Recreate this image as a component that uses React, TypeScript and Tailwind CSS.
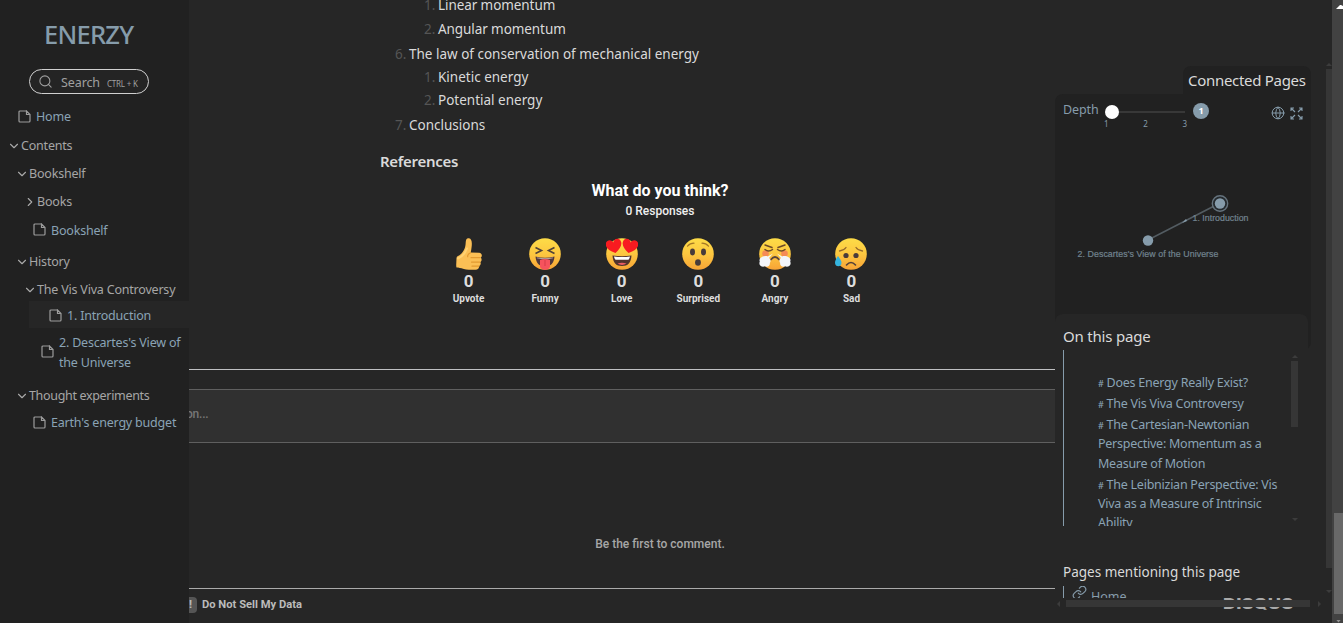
import type { ReactNode } from "react";
import { ChevronDown, ChevronRight, Globe, Link, Search } from "lucide-react";

function PageIcon() {
  return (
    <svg viewBox="0 0 13 13" className="mb-[3px] size-[13px] shrink-0 text-[#9c9c9c]" fill="none" stroke="currentColor" strokeWidth="1.2">
      <path d="M8.5 1H2Q1 1 1 2v9q0 1 1 1h9q1 0 1-1V4.5L8.5 1v3.5H12" />
    </svg>
  );
}

function Folder({ label, open = true, className }: { label: string; open?: boolean; className: string }) {
  const Icon = open ? ChevronDown : ChevronRight;
  return (
    <div className={`flex items-center whitespace-nowrap text-[#a6a6a6] ${className}`}>
      <Icon className="mb-px -ml-px size-[14px] shrink-0 text-[#aaaaaa]" strokeWidth={1.9} />
      <span>{label}</span>
    </div>
  );
}

function PageLink({ children, className }: { children: ReactNode; className: string }) {
  return (
    <div className={`flex items-center gap-[5px] whitespace-nowrap text-[#8aa3b5] ${className}`}>
      <PageIcon />
      <span>{children}</span>
    </div>
  );
}

function Sidebar() {
  return (
    <aside className="flex h-full w-[189px] shrink-0 flex-col bg-[#212121] text-[12.5px] tracking-[-0.2px]">
      <div className="mt-[16px] mb-px flex h-9 items-center pl-[44px] text-[25.5px] font-medium tracking-[-0.75px] text-[#869cab]">ENERZY</div>
      <div className="mt-[16px] ml-[29px] flex h-[25px] w-[120px] items-center rounded-full border border-[#d0d0d0] bg-[#242424] pl-[8px] text-[#a0a0a0]">
        <Search className="mb-px size-[15px]" strokeWidth={1.7} />
        <span className="mt-[3px] ml-[8px] tracking-[-0.1px]">Search</span>
        <span className="mt-[4px] ml-[7px] whitespace-nowrap text-[8px]">CTRL + K</span>
      </div>
      <nav className="mt-2 flex flex-col">
        <PageLink className="h-[29px] pt-[2px] pl-[18px]">Home</PageLink>
        <Folder label="Contents" className="h-7 pt-[2px] pl-[8px]" />
        <Folder label="Bookshelf" className="h-7 pt-[2px] pl-[16px]" />
        <Folder label="Books" open={false} className="h-7 pt-[2px] pl-[24px]" />
        <PageLink className="h-[30px] pt-[2px] pl-[33px]">Bookshelf</PageLink>
        <Folder label="History" className="mt-[2px] h-7 pt-[2px] pl-[16px]" />
        <Folder label="The Vis Viva Controversy" className="h-[26px] pt-[5px] pl-[24px]" />
        <PageLink className="ml-[29px] h-[27px] bg-[#262626] pt-[4px] pl-[20px]">1. Introduction</PageLink>
        <PageLink className="mt-[5px] h-10 pl-[41px] leading-5">
          2. Descartes's View of
          <br />
          the Universe
        </PageLink>
        <Folder label="Thought experiments" className="mt-[9px] h-7 pl-[16px] tracking-[-0.33px]" />
        <PageLink className="h-[27px] pl-[33px]">Earth's energy budget</PageLink>
      </nav>
    </aside>
  );
}

function Item({ n, children, className }: { n: string; children: string; className: string }) {
  return (
    <div className={`flex items-center ${className}`}>
      <span className="w-[14px] shrink-0 text-[#555555]">{n}</span>
      <span>{children}</span>
    </div>
  );
}

function Face({ children }: { children: ReactNode }) {
  return (
    <svg viewBox="0 0 32 32" className="size-8">
      <defs>
        <linearGradient id="face" x1="0" y1="0" x2="0" y2="1">
          <stop offset="0" stopColor="#fddc47" />
          <stop offset="0.5" stopColor="#fdc740" />
          <stop offset="1" stopColor="#f7a336" />
        </linearGradient>
      </defs>
      <circle cx="16" cy="16" r="15.8" fill="url(#face)" />
      {children}
    </svg>
  );
}

const heart = "M0 6.5C-4.5 3.6-7 1-7-2c0-4.5 5.7-5.2 7-1.2C1.3-7.2 7-6.5 7-2c0 3-2.5 5.6-7 8.5Z";

const reactions: { label: string; icon: ReactNode }[] = [
  {
    label: "Upvote",
    icon: (
      <svg viewBox="0 0 32 32" className="size-8">
        <path d="M3.5 20c0-2 3-2.2 5-4.5 3-3.5 4-6 4.200-11C12.800 1.200 14-.2 16 .3c3.200.8 3.600 4.700 1.700 14.200l8.300.3c3.200.2 3.600 3.800 1.700 4.800 1.500 1.500 1 3.800-.4 4.400 1 1.700.2 3.700-1.300 4.100.3 2-.9 3.500-3.500 3.600-7 .4-10-.3-14-1.500-4.500-1.200-5.300 1-5.300-3.200Z" fill="#fbbf55" />
        <path d="M17.500 14.700c-2 .8-3 2.300-2.800 4M18 19.700h9M18.500 24.100h8.300M19 28.200h7" fill="none" stroke="#e29a31" strokeWidth="1.200" strokeLinecap="round" />
        <path d="M5 20.500c4-1.500 7-5 9-10" fill="none" stroke="#ffd274" strokeWidth="2" strokeLinecap="round" />
      </svg>
    ),
  },
  {
    label: "Funny",
    icon: (
      <Face>
        <path d="m6.500 9.500 6 3-6 3M25.500 9.500l-6 3 6 3" fill="none" stroke="#514238" strokeWidth="1.600" />
        <path d="M6.500 18.500Q16 21 25.500 18.500C25 25 22 28.500 16 28.500S7 25 6.500 18.500Z" fill="#51383a" />
        <path d="M8 19.500q8 1.400 16 0v.8q-8 2-16 0Z" fill="#b9a5a2" />
        <path d="M11 22q5-2 10 0v6c0 5-10 5-10 0Z" fill="#f6535d" />
        <path d="M16 22v6" stroke="#d73d4b" />
      </Face>
    ),
  },
  {
    label: "Love",
    icon: (
      <Face>
        <path d={heart} transform="translate(8 8) rotate(-12) scale(1.12)" fill="#f81b20" />
        <path d={heart} transform="translate(24 8) rotate(12) scale(1.12)" fill="#f81b20" />
        <path d="M6.500 17.500Q16 19 25.500 17.500C25 25 22 28 16 28S7 25 6.500 17.500Z" fill="#51332d" />
        <path d="M8 18.500q8 1 16 0-.3 2-1.500 3.200h-13Q8.200 20.500 8 18.500Z" fill="#fff" />
        <path d="M11.500 25.500q4.500-1.600 9 0-4.500 2.800-9 0Z" fill="#ee5c63" />
      </Face>
    ),
  },
  {
    label: "Surprised",
    icon: (
      <Face>
        <path d="M5.500 8.200q2.500-3 6.500-3M26.500 8.200q-2.500-3-6.500-3" fill="none" stroke="#a57825" strokeWidth="1.200" strokeLinecap="round" />
        <ellipse cx="10.500" cy="14" rx="2.500" ry="3.400" fill="#493b3a" />
        <ellipse cx="21.500" cy="14" rx="2.500" ry="3.400" fill="#493b3a" />
        <ellipse cx="16" cy="24.500" rx="2.900" ry="3.300" fill="#493b3a" />
      </Face>
    ),
  },
  {
    label: "Angry",
    icon: (
      <Face>
        <circle cx="6.500" cy="15.500" r="3.300" fill="#f58b55" />
        <circle cx="25.500" cy="15.500" r="3.300" fill="#f58b55" />
        <path d="m6 7 7 2.500M26 7l-7 2.500M6 11.500q3.500 3 7.500 0M26 11.500q-3.500 3-7.500 0" fill="none" stroke="#6c4a28" strokeWidth="1.500" strokeLinecap="round" />
        <path d="M12 21.500q4-5 8 0" fill="none" stroke="#59433a" strokeWidth="1.800" strokeLinecap="round" />
        <path d="M14 15.500 8.800 18.500C5 17-1 20 .8 23.500-1 27 3 30 6 28.300c3 1.200 5.500-1 4.800-3.300 1.500-2 .5-4-.8-5Z" fill="#f3f5fa" />
        <path d="m18 15.500 5.200 3c3.800-1.500 9.800 1.500 8 5 1.800 3.500-2.200 6.500-5.200 4.800-3 1.200-5.500-1-4.800-3.300-1.500-2-.5-4 .8-5Z" fill="#f3f5fa" />
      </Face>
    ),
  },
  {
    label: "Sad",
    icon: (
      <Face>
        <path d="M4.500 13q4.500-.5 6.500-3.500M27.500 13q-4.500-.5-6.500-3.500" fill="none" stroke="#94682b" strokeWidth="1.300" strokeLinecap="round" />
        <circle cx="11" cy="17.500" r="2.600" fill="#493b3a" />
        <circle cx="21" cy="17.500" r="2.600" fill="#493b3a" />
        <path d="M11.500 27q4.500-5 9 0" fill="none" stroke="#54403a" strokeWidth="1.600" strokeLinecap="round" />
        <path d="M3 18c-2 3-3 4.500-3 6.700C0 29.500 6.500 29.500 6.500 24.700 6.500 22.500 5 21 3 18Z" fill="#35b4de" />
      </Face>
    ),
  },
];

function Content() {
  return (
    <main className="flex h-full w-[866px] shrink-0 flex-col">
      <div className="flex flex-col pl-[206px] text-[13.5px] text-[#dadada]">
        <Item n="1." className="-mt-[7px] h-6 pl-[29px] tracking-[-0.08px]">Linear momentum</Item>
        <Item n="2." className="h-6 pl-[29px] tracking-[-0.08px]">Angular momentum</Item>
        <Item n="6." className="mt-px h-6">The law of conservation of mechanical energy</Item>
        <Item n="1." className="h-[23px] pl-[29px]">Kinetic energy</Item>
        <Item n="2." className="h-[23px] pl-[29px]">Potential energy</Item>
        <Item n="7." className="h-[27px]">Conclusions</Item>
      </div>
      <h2 className="mt-3 flex h-[20px] items-center pl-[191px] text-[15px] font-semibold tracking-[-0.3px] text-[#dadada]">References</h2>
      <section className="flex flex-col items-center pl-[76px] font-['Roboto',sans-serif]">
        <h3 className="mt-[10px] h-5 text-[16px] leading-5 font-bold text-white">What do you think?</h3>
        <p className="mt-[2px] h-[17px] text-[12px] leading-[17px] font-medium text-[#f0f0f0]">0 Responses</p>
        <div className="mt-[18px] grid grid-cols-[repeat(6,76.6px)]">
          {reactions.map((r) => (
            <div key={r.label} className="flex flex-col items-center text-[#dddddd]">
              {r.icon}
              <span className="mt-px text-[17px] leading-[20px] font-bold">0</span>
              <span className="mt-[2px] text-[10px] leading-[12px] font-bold">{r.label}</span>
            </div>
          ))}
        </div>
      </section>
      <section className="mt-[64px] flex flex-col border-t border-[#bfc0c2] font-['Roboto',sans-serif]">
        <div className="mt-[19px] flex h-[54px] items-center overflow-hidden border-y border-[#5f5f5f] bg-[#303030] pb-[5px] text-[12px] font-medium text-[#777777]">
          <span className="-ml-[3px] tracking-[-0.2px]">on...</span>
        </div>
        <p className="mt-[92px] h-[18px] pl-[76px] text-center text-[12px] leading-[18px] font-medium text-[#a7a7a7]">Be the first to comment.</p>
        <footer className="mt-[35px] flex h-[34px] items-center gap-[5px] border-t border-[#aaaaaa] pb-px text-[11.2px] font-bold text-[#bbbbbb]">
          <span className="flex h-4 w-2 items-center justify-start rounded-r-[4px] bg-[#555555]">!</span>
          Do Not Sell My Data
        </footer>
      </section>
    </main>
  );
}

function Expand() {
  return (
    <svg viewBox="0 0 13 13" className="size-[13px]" fill="none" stroke="currentColor" strokeWidth="1.1">
      <path d="M1 4V1h3M1 1l4 4M9 1h3v3M12 1 8 5M1 9v3h3M1 12l4-4M12 9v3H9M12 12 8 8" />
    </svg>
  );
}

function ConnectedPages() {
  return (
    <section className="flex h-[248px] w-[256px] shrink-0 flex-col">
      <div className="flex h-7 w-[128px] shrink-0 items-center self-end rounded-t-[8px] bg-[#212121] pt-px pl-[5px] text-[15px] tracking-[-0.3px] whitespace-nowrap text-[#dadada]">Connected Pages</div>
      <div className="flex h-[256px] shrink-0 flex-col rounded-l-[8px] rounded-br-[8px] bg-[#212121] text-[#869cab]">
        <div className="flex h-[34px] items-start pl-[8px]">
          <span className="mt-[7px] w-[42px] text-[12.5px] tracking-[-0.1px]">Depth</span>
          <div className="mt-[11px] flex w-[82px] flex-col">
            <div className="flex h-[14px] items-center">
              <span className="size-[14px] rounded-full bg-white" />
              <span className="h-[2px] w-[66px] bg-[#383838]" />
            </div>
            <div className="-ml-[1px] flex h-[9px] w-[83px] justify-between text-[8px] leading-[9px]">
              <span>1</span><span>2</span><span>3</span>
            </div>
          </div>
          <span className="mt-[9px] ml-[6px] flex size-4 items-center justify-center rounded-full bg-[#869cab] text-[9px] font-bold text-white">1</span>
          <Globe className="mt-[12px] ml-[62px] size-[14px]" strokeWidth={1.7} />
          <span className="mt-[13px] ml-[5px]"><Expand /></span>
        </div>
        <svg viewBox="0 34 256 180" className="h-[180px] w-[256px] font-['Liberation_Sans',sans-serif]">
          <path d="M93 146 165 109" stroke="#535c62" strokeWidth="1.5" />
          <path d="m127 129 4-4 1 2Z" fill="#869cab" />
          <circle cx="93" cy="146.500" r="5.200" fill="#869cab" />
          <circle cx="165" cy="109.500" r="7.700" fill="#252a2e" stroke="#65737d" strokeWidth="1.400" />
          <circle cx="165" cy="109.500" r="5.200" fill="#869cab" />
          <text x="165.500" y="127" textAnchor="middle" fontSize="8.8" fill="#728490" stroke="#728490" strokeWidth="0.200" textLength="56">1. Introduction</text>
          <text x="93" y="163" textAnchor="middle" fontSize="8.8" fill="#728490" stroke="#728490" strokeWidth="0.200" textLength="141">2. Descartes's View of the Universe</text>
        </svg>
      </div>
    </section>
  );
}

function Up() {
  return <svg viewBox="0 0 6 3" className="h-[3px] w-[6px] shrink-0"><path d="m3 0 3 3H0Z" fill="#3c3c3c" /></svg>;
}
function Down() {
  return <svg viewBox="0 0 6 3" className="h-[3px] w-[6px] shrink-0"><path d="M0 0h6L3 3Z" fill="#3c3c3c" /></svg>;
}

function Heading({ children }: { children: ReactNode }) {
  return (
    <div className="text-[#8aa3b5]">
      <span className="mr-[3px] text-[9px] leading-none font-medium">#</span>
      {children}
    </div>
  );
}

function RightPanel() {
  return (
    <aside className="flex h-full w-[277px] shrink-0">
      <div className="flex w-[271px] flex-col pt-[66px]">
        <ConnectedPages />
        <section className="relative flex h-[212px] w-[253px] shrink-0 flex-col rounded-t-[8px] bg-[#262626] pl-[8px]">
          <h3 className="mt-[10px] mb-[1px] h-[25px] shrink-0 text-[15px] leading-[25px] tracking-[-0.2px] text-[#dadada]">On this page</h3>
          <div className="flex h-[176px] shrink-0 overflow-hidden border-l border-[#869cab]">
            <div className="flex w-[227px] shrink-0 flex-col gap-[1.8px] pt-[23px] pl-[34px] text-[12.5px] leading-[19.3px] tracking-[-0.25px] whitespace-nowrap">
              <Heading>Does Energy Really Exist?</Heading>
              <Heading>The Vis Viva Controversy</Heading>
              <Heading>The Cartesian-Newtonian<br />Perspective: Momentum as a<br />Measure of Motion</Heading>
              <Heading>The Leibnizian Perspective: Vis<br />Viva as a Measure of Intrinsic<br />Ability</Heading>
            </div>
            <div className="flex w-[7px] flex-col items-center pt-[5px] pb-[5px]">
              <Up />
              <span className="mt-[3px] mb-auto h-[66px] w-[7px] bg-[#363636]" />
              <Down />
            </div>
          </div>
        </section>
        <section className="mt-[36px] flex flex-col pl-[8px]">
          <h3 className="h-[20px] text-[13.5px] leading-[21px] text-[#dadada]">Pages mentioning this page</h3>
          <div className="mt-[4px] flex h-[12px] overflow-hidden border-l border-[#869cab] pl-[8px] text-[12.5px] leading-[21px] text-[#869cab]">
            <Link className="-mt-px size-[15px] shrink-0" strokeWidth={1.8} />
            <span className="ml-[4px]">Home</span>
          </div>
        </section>
        <div className="relative flex h-[13px] items-center pl-[2px]">
          <span className="absolute top-0 left-[168px] origin-left scale-x-[1.22] font-['Inter',sans-serif] text-[15px] leading-[12px] font-extrabold text-[#aaaaaa]">DISQUS</span>
          <div className="relative -mt-[2px] flex h-[7px] items-center">
            <svg viewBox="0 0 3 6" className="h-[6px] w-[3px]"><path d="M3 0v6L0 3Z" fill="#3c3c3c" /></svg>
            <span className="ml-[6px] h-[7px] w-[244px] bg-[#363636]" />
            <svg viewBox="0 0 3 6" className="ml-[8px] h-[6px] w-[3px]"><path d="m0 0 3 3-3 3Z" fill="#3c3c3c" /></svg>
          </div>
        </div>
      </div>
      <div className="flex w-[6px] flex-col items-center pt-[63px]">
        <Up />
        <span className="mt-[3px] h-[499px] w-[6px] bg-[#363636]" />
        <span className="mt-[22px] flex"><Down /></span>
      </div>
    </aside>
  );
}

export default function App() {
  return (
    <div className="flex h-[623px] w-[1343px] overflow-hidden bg-[#262626] font-['Noto_Sans',sans-serif]">
      <Sidebar />
      <Content />
      <RightPanel />
      <div className="flex h-full w-[11px] shrink-0 flex-col items-end bg-[#424242] pl-[2px]">
        <svg viewBox="0 0 7 4" className="mt-[5px] h-[4px] w-[7px]"><path d="M0 4h7V1L5 0H4Z" fill="#ffffff" /></svg>
        <span className="mt-[504px] h-[101px] w-[9px] bg-[#686868]" />
        <svg viewBox="0 0 9 5" className="mt-[6px] h-[3px] w-[9px]"><path d="M1 0h7L4.5 4Z" fill="#929292" /></svg>
      </div>
    </div>
  );
}
